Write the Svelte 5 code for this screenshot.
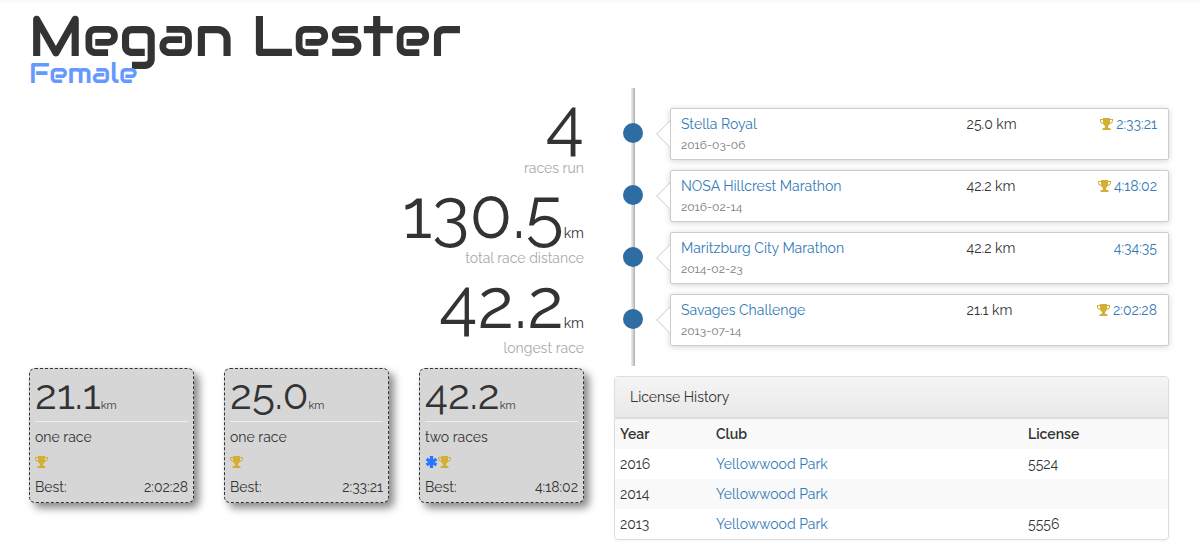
<script>
  const stats = [
    { value: '4', unit: '', label: 'races run' },
    { value: '130.5', unit: 'km', label: 'total race distance' },
    { value: '42.2', unit: 'km', label: 'longest race' }
  ];
  const distances = [
    { km: '21.1', count: 'one race', star: false, best: '2:02:28' },
    { km: '25.0', count: 'one race', star: false, best: '2:33:21' },
    { km: '42.2', count: 'two races', star: true, best: '4:18:02' }
  ];
  const races = [
    { name: 'Stella Royal', date: '2016-03-06', km: '25.0 km', time: '2:33:21', trophy: true },
    { name: 'NOSA Hillcrest Marathon', date: '2016-02-14', km: '42.2 km', time: '4:18:02', trophy: true },
    { name: 'Maritzburg City Marathon', date: '2014-02-23', km: '42.2 km', time: '4:34:35', trophy: false },
    { name: 'Savages Challenge', date: '2013-07-14', km: '21.1 km', time: '2:02:28', trophy: true }
  ];
  const licenses = [
    { year: '2016', club: 'Yellowwood Park', license: '5524' },
    { year: '2014', club: 'Yellowwood Park', license: '' },
    { year: '2013', club: 'Yellowwood Park', license: '5556' }
  ];
</script>

{#snippet trophy()}
  <svg class="icon" viewBox="0 0 14 14" width="14" height="14" aria-hidden="true">
    <path fill="#d4af37" fill-rule="evenodd" d="M3 1h7v1h3v1.600c0 2-1.200 3.200-3.300 3.500C9.400 8 8.800 8.700 8 9v1.500c.2.300.6.500 1.200.5h.5c.5 0 .8.400.8 1v1h-8v-1c0-.6.300-1 .800-1h.5c.6 0 1-.2 1.200-.5V9c-.8-.3-1.400-1-1.700-1.900C1.200 6.800 0 5.600 0 3.600V2h3V1zM1 3v.6c0 1.300.700 2.100 2 2.400V3H1zm11 0h-2v3c1.300-.3 2-1.100 2-2.400V3z" />
  </svg>
{/snippet}

<main>
  <header>
    <h1>Megan Lester</h1>
    <p class="gender">Female</p>
  </header>

  <div class="columns">
    <section>
      {#each stats as s}
        <div class="stat">
          <div class="figure"><span class="big">{s.value}</span>{s.unit}</div>
          <div class="caption">{s.label}</div>
        </div>
      {/each}
      <div class="cards">
        {#each distances as d}
          <article class="card">
            <div class="distance"><span class="medium">{d.km}</span>km</div>
            <div>{d.count}</div>
            <div class="awards">
              {#if d.star}
                <svg class="icon star" viewBox="0 0 13 14" width="13" height="14" aria-hidden="true">
                  <path stroke="#2a75ff" stroke-width="3.2" d="M6.500 1v12M1.500 4.100l10 5.800M1.500 9.900l10-5.800" />
                </svg>
              {/if}
              {@render trophy()}
            </div>
            <div class="best"><span>Best:</span><span>{d.best}</span></div>
          </article>
        {/each}
      </div>
    </section>

    <section>
      <ul class="timeline">
        {#each races as r}
          <li>
            <span class="dot"></span>
            <div class="race">
              <div>
                <a href="#race">{r.name}</a>
                <div class="date">{r.date}</div>
              </div>
              <div>{r.km}</div>
              <div class="time">
                {#if r.trophy}{@render trophy()}{/if}
                <a href="#result">{r.time}</a>
              </div>
            </div>
          </li>
        {/each}
      </ul>

      <div class="panel">
        <h2>License History</h2>
        <table>
          <thead>
            <tr><th class="year">Year</th><th>Club</th><th class="license">License</th></tr>
          </thead>
          <tbody>
            {#each licenses as l}
              <tr><td>{l.year}</td><td><a href="#club">{l.club}</a></td><td>{l.license}</td></tr>
            {/each}
          </tbody>
        </table>
      </div>
    </section>
  </div>
</main>

<style>
  :global(body) {
    margin: 0;
    background: #fff;
  }
  main {
    box-sizing: border-box;
    padding: 0 31px 10px 29px;
    font: 14px/20px Raleway, Lato, sans-serif;
    color: #333;
    background: linear-gradient(#f8f8f8, #fff 3px);
  }
  a {
    color: #337ab7;
    text-decoration: none;
  }
  header {
    height: 88px;
    font-family: Audiowide, "DejaVu Sans", sans-serif;
  }
  h1 {
    margin: 0;
    padding-top: 10px;
    font-size: 56px;
    line-height: 53px;
    font-weight: 400;
  }
  .gender {
    width: fit-content;
    margin: 0;
    font-size: 28px;
    line-height: 20px;
    color: #69f;
    background: rgba(255, 255, 255, 0.3);
  }
  .columns {
    display: grid;
    grid-template-columns: 1fr 1fr;
    gap: 30px;
  }
  .stat {
    text-align: right;
  }
  .figure {
    height: 70px;
    line-height: 70px;
  }
  .big {
    font-size: 70px;
  }
  .caption {
    color: #aaa;
  }
  .cards {
    display: grid;
    grid-template-columns: repeat(3, 1fr);
    gap: 30px;
    margin-top: 10px;
  }
  .card {
    display: grid;
    gap: 5px;
    padding: 0 5px 5px;
    border: 1px dashed #333;
    border-radius: 6px;
    background: #d6d6d6;
    box-shadow: 5px 5px 8px #888;
  }
  .distance {
    height: 52px;
    line-height: 52px;
    font-size: 11px;
    border-bottom: 1px solid #eee;
  }
  .medium {
    font-size: 42px;
  }
  .awards {
    display: flex;
    align-items: center;
    height: 20px;
  }
  .best {
    display: flex;
    justify-content: space-between;
  }
  .icon {
    flex: none;
  }
  .timeline {
    display: grid;
    gap: 10px;
    margin: 0 0 10px;
    padding: 20px 0;
    list-style: none;
    background: linear-gradient(to right, #eee, #ccc 60%, #aaa) 17px 0 / 4px 100% no-repeat;
  }
  .timeline li {
    display: flex;
    align-items: flex-start;
    gap: 27px;
    padding-left: 9px;
  }
  .dot {
    flex: none;
    width: 20px;
    height: 20px;
    margin-top: 15px;
    border-radius: 50%;
    background: #2e6da4;
  }
  .race {
    position: relative;
    flex: 1;
    display: grid;
    grid-template-columns: 3fr 1fr 1fr;
    padding: 5px 11px 3px 10px;
    border: 1px solid #ccc;
    border-radius: 2px;
    box-shadow: 0 1px 6px rgba(0, 0, 0, 0.175);
    background: #fff;
  }
  .race::before {
    content: "";
    position: absolute;
    left: -11px;
    top: 15px;
    width: 19px;
    height: 19px;
    border: solid #ccc;
    border-width: 0 0 1px 1px;
    background: #fff;
    transform: rotate(45deg);
    clip-path: polygon(0 0, 0 100%, 100% 100%);
  }
  .date {
    font-size: 12px;
    line-height: 22px;
    color: #777;
  }
  .time {
    display: flex;
    justify-content: flex-end;
    gap: 2px;
    height: 20px;
    align-items: center;
  }
  .panel {
    border: 1px solid #ddd;
    border-radius: 4px;
    box-shadow: 0 1px 2px rgba(0, 0, 0, 0.05);
    overflow: hidden;
  }
  h2 {
    margin: 0;
    padding: 10px 15px;
    font-size: 14px;
    line-height: 20px;
    font-weight: 400;
    border-bottom: 2px solid #ddd;
    background: linear-gradient(#f5f5f5, #e8e8e8);
  }
  table {
    width: 100%;
    border-collapse: collapse;
    table-layout: fixed;
  }
  th,
  td {
    height: 20px;
    padding: 5px;
    text-align: left;
  }
  th {
    font-weight: 600;
  }
  .year {
    width: 86px;
  }
  .license {
    width: 135px;
  }
  thead tr,
  tbody tr:nth-child(even) {
    background: #f9f9f9;
  }
</style>
